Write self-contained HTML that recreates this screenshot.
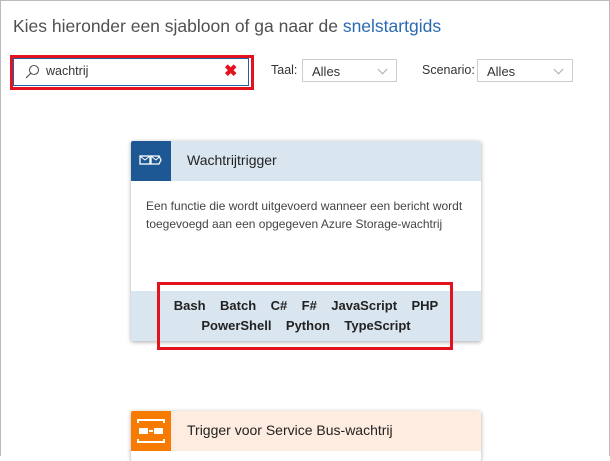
<html><head><style>
body{margin:0;width:610px;height:457px;overflow:hidden;font-family:"Liberation Sans",sans-serif;background:#fff;position:relative}
.frame{position:absolute;left:0;top:0;width:608px;height:455px;border:1px solid #bbb;border-bottom:none}
.a{position:absolute}
.t{left:13px;top:16px;font-size:17.5px;color:#505050}
.t span{color:#2a6ab3}
.sel{border:1px solid #ccc;height:23px;font-size:13px;color:#333;line-height:23px;padding-left:9px;box-sizing:border-box}
.sel:after{content:"";position:absolute;right:10px;top:6px;width:6px;height:6px;border-right:1px solid #aaa;border-bottom:1px solid #aaa;transform:rotate(45deg)}
.card{left:131px;width:350px;background:#fff;box-shadow:0 1px 4px rgba(0,0,0,.35);border-radius:2px;overflow:hidden}
.hd{height:40px;position:relative;font-size:14px;color:#222}
.ic{position:absolute;left:0;top:0;width:40px;height:40px}
</style></head><body>
<div class="frame"></div>
<div class="a t">Kies hieronder een sjabloon of ga naar de <span>snelstartgids</span></div>
<div class="a" style="left:10px;top:55px;width:238px;height:29px;border:3px solid #e3121e"></div>
<div class="a" style="left:13px;top:58px;width:236px;height:28px;border:1px solid #1f5fa3;box-sizing:border-box"></div>
<svg class="a" style="left:24px;top:64px" width="16" height="16"><circle cx="10" cy="6" r="4.5" fill="none" stroke="#555" stroke-width="1.1"/><line x1="7" y1="9" x2="2" y2="14" stroke="#555" stroke-width="1.2"/></svg>
<div class="a" style="left:46px;top:64px;font-size:12.5px;color:#333">wachtrij</div>
<div class="a" style="left:224px;top:61px;font-size:16px;font-weight:bold;color:#e3121e">✖</div>
<div class="a" style="left:271px;top:63px;font-size:12.5px;color:#333">Taal:</div>
<div class="a sel" style="left:302px;top:59px;width:95px">Alles</div>
<div class="a" style="left:422px;top:63px;font-size:12.5px;color:#333">Scenario:</div>
<div class="a sel" style="left:477px;top:59px;width:96px">Alles</div>

<div class="a card" style="top:141px;height:200px">
 <div class="hd" style="background:#d9e5ef"><div class="ic" style="background:#1e5894">
  <svg width="40" height="40"><rect x="9" y="15" width="10" height="8" fill="none" stroke="#fff" stroke-width="1.3"/><path d="M9 15l5 4 5-4" fill="none" stroke="#fff"/><path d="M20 15h8l2 4-2 4h-8z" fill="none" stroke="#fff" stroke-width="1.3"/><path d="M20 15l5 4 4-4" fill="none" stroke="#fff"/></svg></div>
  <div class="a" style="left:56px;top:11px">Wachtrijtrigger</div></div>
 <div class="a" style="left:15px;top:56px;font-size:12px;color:#444;line-height:18px">Een functie die wordt uitgevoerd wanneer een bericht wordt<br>toegevoegd aan een opgegeven Azure Storage-wachtrij</div>
 <div class="a" style="left:0;top:150px;width:350px;height:50px;background:#d9e5ef;text-align:center;font-weight:bold;font-size:13px;color:#222;line-height:20px;padding-top:5px;box-sizing:border-box">Bash&nbsp;&nbsp;&nbsp; Batch&nbsp;&nbsp;&nbsp; C#&nbsp;&nbsp;&nbsp; F#&nbsp;&nbsp;&nbsp; JavaScript&nbsp;&nbsp;&nbsp; PHP<br>PowerShell&nbsp;&nbsp;&nbsp; Python&nbsp;&nbsp;&nbsp; TypeScript</div>
</div>
<div class="a" style="left:157px;top:282px;width:290px;height:62px;border:3px solid #e3121e"></div>

<div class="a card" style="top:411px;height:50px">
 <div class="hd" style="background:#fdecdf"><div class="ic" style="background:#f77b00">
  <svg width="40" height="40"><path d="M7 12V9h26v3M7 28v3h26v-3" fill="none" stroke="#fff" stroke-width="2"/><rect x="8" y="17" width="9" height="6" fill="#fff"/><rect x="23" y="17" width="9" height="6" fill="#fff"/><rect x="18" y="19" width="4" height="2" fill="#fff"/></svg></div>
  <div class="a" style="left:56px;top:11px">Trigger voor Service Bus-wachtrij</div></div>
</div>
</body></html>
